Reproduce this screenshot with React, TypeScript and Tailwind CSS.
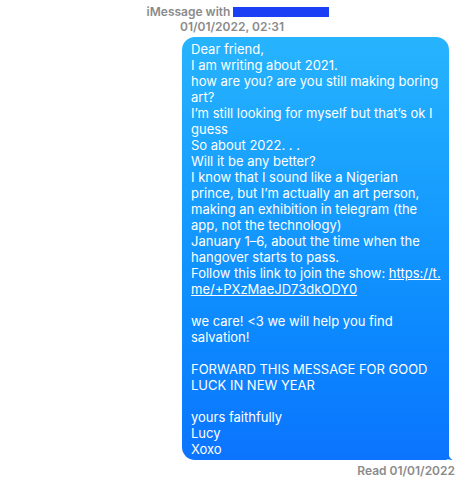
const lines: (string | { link: string; pre: string } | null)[] = [
  'Dear friend,',
  'I am writing about 2021.',
  'how are you? are you still making boring',
  'art?',
  'I\u2019m still looking for myself but that\u2019s ok I',
  'guess',
  'So about 2022. . .',
  'Will it be any better?',
  'I know that I sound like a Nigerian',
  'prince, but I\u2019m actually an art person,',
  'making an exhibition in telegram (the',
  'app, not the technology)',
  'January 1\u20136, about the time when the',
  'hangover starts to pass.',
  { pre: 'Follow this link to join the show: ', link: 'https://t.' },
  { pre: '', link: 'me/+PXzMaeJD73dkODY0' },
  null,
  'we care! <3 we will help you find',
  'salvation!',
  null,
  'FORWARD THIS MESSAGE FOR GOOD',
  'LUCK IN NEW YEAR',
  null,
  'yours faithfully',
  'Lucy',
  'Xoxo',
];

export default function App() {
  return (
    <div className="w-[458px] h-[481px] bg-white font-['Inter',sans-serif] overflow-hidden">
      {/* header */}
      <div className="pt-[4px] flex flex-col items-center text-[12px] leading-[15px] font-semibold text-[#8b8b8b]">
        <div className="flex items-center pl-[18px]">
          <span>iMessage with</span>
          <span className="ml-[3px] w-[96px] h-[10px] bg-[#1b3ff4]" />
        </div>
        <div className="ml-[6px]">01/01/2022, 02:31</div>
      </div>

      {/* bubble */}
      <div className="flex justify-end pr-[9px] mt-[3px]">
        <div className="relative w-[267px] rounded-[13px] rounded-br-[4px] bg-gradient-to-b from-[#27b4fd] to-[#0c74fe] pl-[9px] pr-[6px] pt-[4px] pb-[3px] text-white text-[13px] leading-[16px]">
          {lines.map((l, i) => {
            if (l === null) return <div key={i} className="h-[16px]" />;
            if (typeof l === 'string')
              return (
                <div key={i} className="whitespace-nowrap">
                  {l}
                </div>
              );
            return (
              <div key={i} className="whitespace-nowrap">
                {l.pre}
                <span className="underline">{l.link}</span>
              </div>
            );
          })}
          <svg className="absolute right-[-4px] bottom-0" width="10" height="10" viewBox="0 0 10 10">
            <path d="M0 0 L5 0 C5 4 6 8 10 10 C6 10 3 9 0 7 Z" fill="#0c74fe" />
          </svg>
        </div>
      </div>

      {/* read receipt */}
      <div className="flex justify-end pr-[3px] mt-[3px] text-[12px] leading-[15px] font-semibold text-[#8b8b8b]">
        Read 01/01/2022
      </div>
    </div>
  );
}
